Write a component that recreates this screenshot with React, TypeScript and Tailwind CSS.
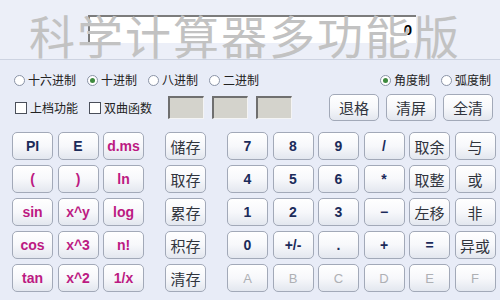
import React from 'react';

const CJK = "font-['Noto_Sans_CJK_SC',sans-serif]";
const LATIN = "font-['Liberation_Sans','Noto_Sans_CJK_SC',sans-serif]";

type Tone = 'navy' | 'pink' | 'cjk' | 'muted';

const toneClass: Record<Tone, string> = {
  navy: `${LATIN} font-bold text-[14px] text-[#1b2b5a]`,
  pink: `${LATIN} font-bold text-[14px] text-[#bc1a82]`,
  cjk: `${CJK} text-[15px] text-[#30343d]`,
  muted: `${LATIN} text-[13px] text-[#aeb0b4]`,
};

function Key({ label, tone = 'navy', wide = false }: { label: string; tone?: Tone; wide?: boolean }) {
  return (
    <div
      className={`flex items-center justify-center ${wide ? 'w-[50px] h-[27px]' : 'w-[41px] h-[28px]'} rounded-[5px] border border-[#a2a9b8] bg-gradient-to-b from-white via-[#f7f8fb] to-[#e3e7ef] shadow-[inset_0_1px_0_#ffffff] leading-none ${toneClass[tone]}`}
    >
      {label}
    </div>
  );
}

function Radio({ label, checked = false }: { label: string; checked?: boolean }) {
  return (
    <div className="flex items-center gap-[3px]">
      <span className="flex h-[11px] w-[11px] items-center justify-center rounded-full border border-[#8a93a6] bg-white">
        {checked && <span className="h-[5px] w-[5px] rounded-full bg-[#3e8a3e]" />}
      </span>
      <span className={`${CJK} text-[12px] text-[#222] leading-none`}>{label}</span>
    </div>
  );
}

function Check({ label }: { label: string }) {
  return (
    <div className="flex items-center gap-[3px]">
      <span className="h-[12px] w-[12px] border border-[#4a4f5a] bg-white" />
      <span className={`${CJK} text-[12px] text-[#222] leading-none`}>{label}</span>
    </div>
  );
}

function GrayBox() {
  return <div className="h-[23px] w-[36px] border-t-2 border-l-2 border-[#6f6f6f] border-r border-b border-r-[#f4f4f4] border-b-[#f4f4f4] bg-[#d4d3cc]" />;
}

const leftRows: [string, Tone][][] = [
  [['PI', 'navy'], ['E', 'navy'], ['d.ms', 'pink']],
  [['(', 'pink'], [')', 'pink'], ['ln', 'pink']],
  [['sin', 'pink'], ['x^y', 'pink'], ['log', 'pink']],
  [['cos', 'pink'], ['x^3', 'pink'], ['n!', 'pink']],
  [['tan', 'pink'], ['x^2', 'pink'], ['1/x', 'pink']],
];

const memory = ['储存', '取存', '累存', '积存', '清存'];

const rightRows: [string, Tone][][] = [
  [['7', 'navy'], ['8', 'navy'], ['9', 'navy'], ['/', 'navy'], ['取余', 'cjk'], ['与', 'cjk']],
  [['4', 'navy'], ['5', 'navy'], ['6', 'navy'], ['*', 'navy'], ['取整', 'cjk'], ['或', 'cjk']],
  [['1', 'navy'], ['2', 'navy'], ['3', 'navy'], ['−', 'navy'], ['左移', 'cjk'], ['非', 'cjk']],
  [['0', 'navy'], ['+/-', 'navy'], ['.', 'navy'], ['+', 'navy'], ['=', 'navy'], ['异或', 'cjk']],
  [['A', 'muted'], ['B', 'muted'], ['C', 'muted'], ['D', 'muted'], ['E', 'muted'], ['F', 'muted']],
];

export default function App() {
  return (
    <div className="flex h-[300px] w-[500px] flex-col overflow-hidden bg-[#e8ecf7]">
      {/* header with display and watermark title */}
      <div className="relative h-[60px] border-b border-[#cdd3e1] bg-[#eceff8]">
        <div className="ml-[88px] mt-[15px] flex h-[28px] w-[328px] items-center justify-end border-t-2 border-l-2 border-[#7c7c7c] bg-white pr-[4px]">
          <span className={`${LATIN} text-[15px] font-bold text-black`}>0</span>
        </div>
        <div
          className={`absolute left-[29px] top-[6px] ${CJK} text-[46px] leading-[56px] tracking-[2px] text-[#c2c2c2] whitespace-nowrap`}
        >
          科学计算器多功能版
        </div>
      </div>

      {/* radio row */}
      <div className="mt-[14px] flex items-center justify-between pl-[14px] pr-[9px]">
        <div className="flex items-center gap-[11px]">
          <Radio label="十六进制" />
          <Radio label="十进制" checked />
          <Radio label="八进制" />
          <Radio label="二进制" />
        </div>
        <div className="flex items-center gap-[11px]">
          <Radio label="角度制" checked />
          <Radio label="弧度制" />
        </div>
      </div>

      {/* checkbox row */}
      <div className="mt-[8px] flex items-center pl-[15px] pr-[7px]">
        <div className="flex items-center gap-[11px]">
          <Check label="上档功能" />
          <Check label="双曲函数" />
        </div>
        <div className="ml-[16px] flex gap-[8px]">
          <GrayBox />
          <GrayBox />
          <GrayBox />
        </div>
        <div className="ml-auto flex gap-[7px]">
          <Key label="退格" tone="cjk" wide />
          <Key label="清屏" tone="cjk" wide />
          <Key label="全清" tone="cjk" wide />
        </div>
      </div>

      {/* keypad */}
      <div className="mt-[11px] flex pl-[12px]">
        <div className="flex flex-col gap-[5px]">
          {leftRows.map((row, i) => (
            <div key={i} className="flex gap-[4.5px]">
              {row.map(([l, t]) => (
                <Key key={l} label={l} tone={t} />
              ))}
            </div>
          ))}
        </div>
        <div className="ml-[21px] flex flex-col gap-[5px]">
          {memory.map((l) => (
            <Key key={l} label={l} tone="cjk" />
          ))}
        </div>
        <div className="ml-[21px] flex flex-col gap-[5px]">
          {rightRows.map((row, i) => (
            <div key={i} className="flex gap-[4.5px]">
              {row.map(([l, t], j) => (
                <Key key={j} label={l} tone={t} />
              ))}
            </div>
          ))}
        </div>
      </div>
    </div>
  );
}
